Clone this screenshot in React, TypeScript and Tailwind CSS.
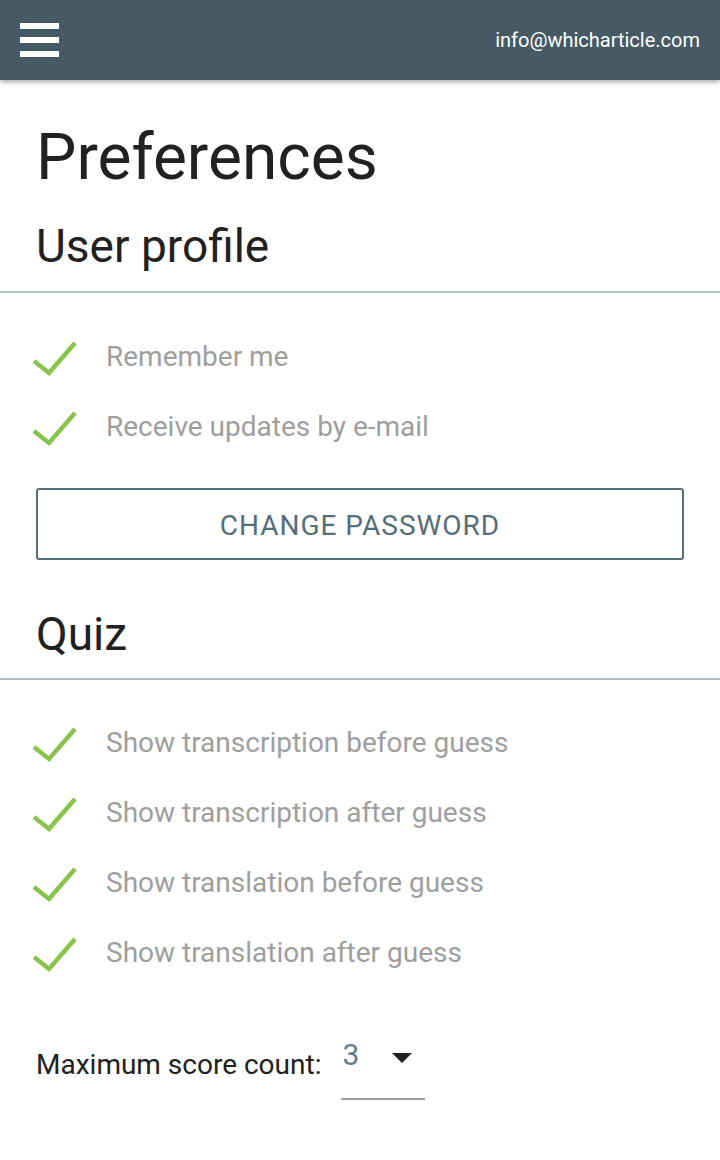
import React from 'react';

const Check = () => (
    <svg width="48" height="48" viewBox="0 0 48 48" className="shrink-0">
        <polyline points="3,28 18,40 44,10" fill="none" stroke="#8bc34a" strokeWidth="4.5" />
    </svg>
);

const Option = ({ label }: { label: string }) => (
    <div className="h-[70px] flex items-center px-[31px] gap-[27px]">
        <Check />
        <span className="text-[28px] leading-none text-[#9e9e9e]">{label}</span>
    </div>
);

const App = () => {
    const userOptions = ['Remember me', 'Receive updates by e-mail'];
    const quizOptions = [
        'Show transcription before guess',
        'Show transcription after guess',
        'Show translation before guess',
        'Show translation after guess',
    ];

    return (
        <div className="min-h-screen bg-white font-['Roboto',sans-serif] text-[#212121]">
            <header className="relative z-10 h-20 bg-[#455a64] flex items-center justify-between px-5 shadow-[0_2px_5px_rgba(0,0,0,0.35)]">
                <svg width="40" height="36" viewBox="0 0 40 36">
                    <rect x="0" y="1" width="39" height="6" fill="#fff" />
                    <rect x="0" y="15" width="39" height="6" fill="#fff" />
                    <rect x="0" y="29" width="39" height="6" fill="#fff" />
                </svg>
                <span className="text-white text-[20px]">info@whicharticle.com</span>
            </header>

            <main>
                <h1 className="px-[36px] pt-[46px] text-[64px] leading-none">Preferences</h1>
                <h2 className="px-[36px] mt-[33px] text-[46px] leading-none">User profile</h2>
                <div className="mt-[22px] h-[2px] bg-[#b0bec5]" />

                <div className="mt-[29px]">
                    {userOptions.map((o) => (
                        <Option key={o} label={o} />
                    ))}
                </div>

                <div className="px-[36px] mt-[26px]">
                    <button className="w-full h-[72px] border-2 border-[#546e7a] rounded-[3px] text-[#546e7a] text-[28px] leading-none tracking-[0.035em] uppercase pt-[3px]">
                        Change password
                    </button>
                </div>

                <h2 className="px-[36px] mt-[51px] text-[46px] leading-none">Quiz</h2>
                <div className="mt-[21px] h-[2px] bg-[#b0bec5]" />

                <div className="mt-[28px]">
                    {quizOptions.map((o) => (
                        <Option key={o} label={o} />
                    ))}
                </div>

                <div className="mt-[52px] px-[36px] flex items-start gap-[20px]">
                    <span className="mt-[11px] text-[28px] leading-none">Maximum score count:</span>
                    <div className="w-[84px] h-[60px] border-b-2 border-[#9e9e9e] flex items-start justify-between pl-[1px] pr-[13px]">
                        <span className="text-[30px] leading-none text-[#607d8b]">3</span>
                        <svg width="20" height="10" viewBox="0 0 20 10" className="mt-[13px]">
                            <polygon points="0,0 20,0 10,10" fill="#212121" />
                        </svg>
                    </div>
                </div>
            </main>
        </div>
    );
};

export default App;
